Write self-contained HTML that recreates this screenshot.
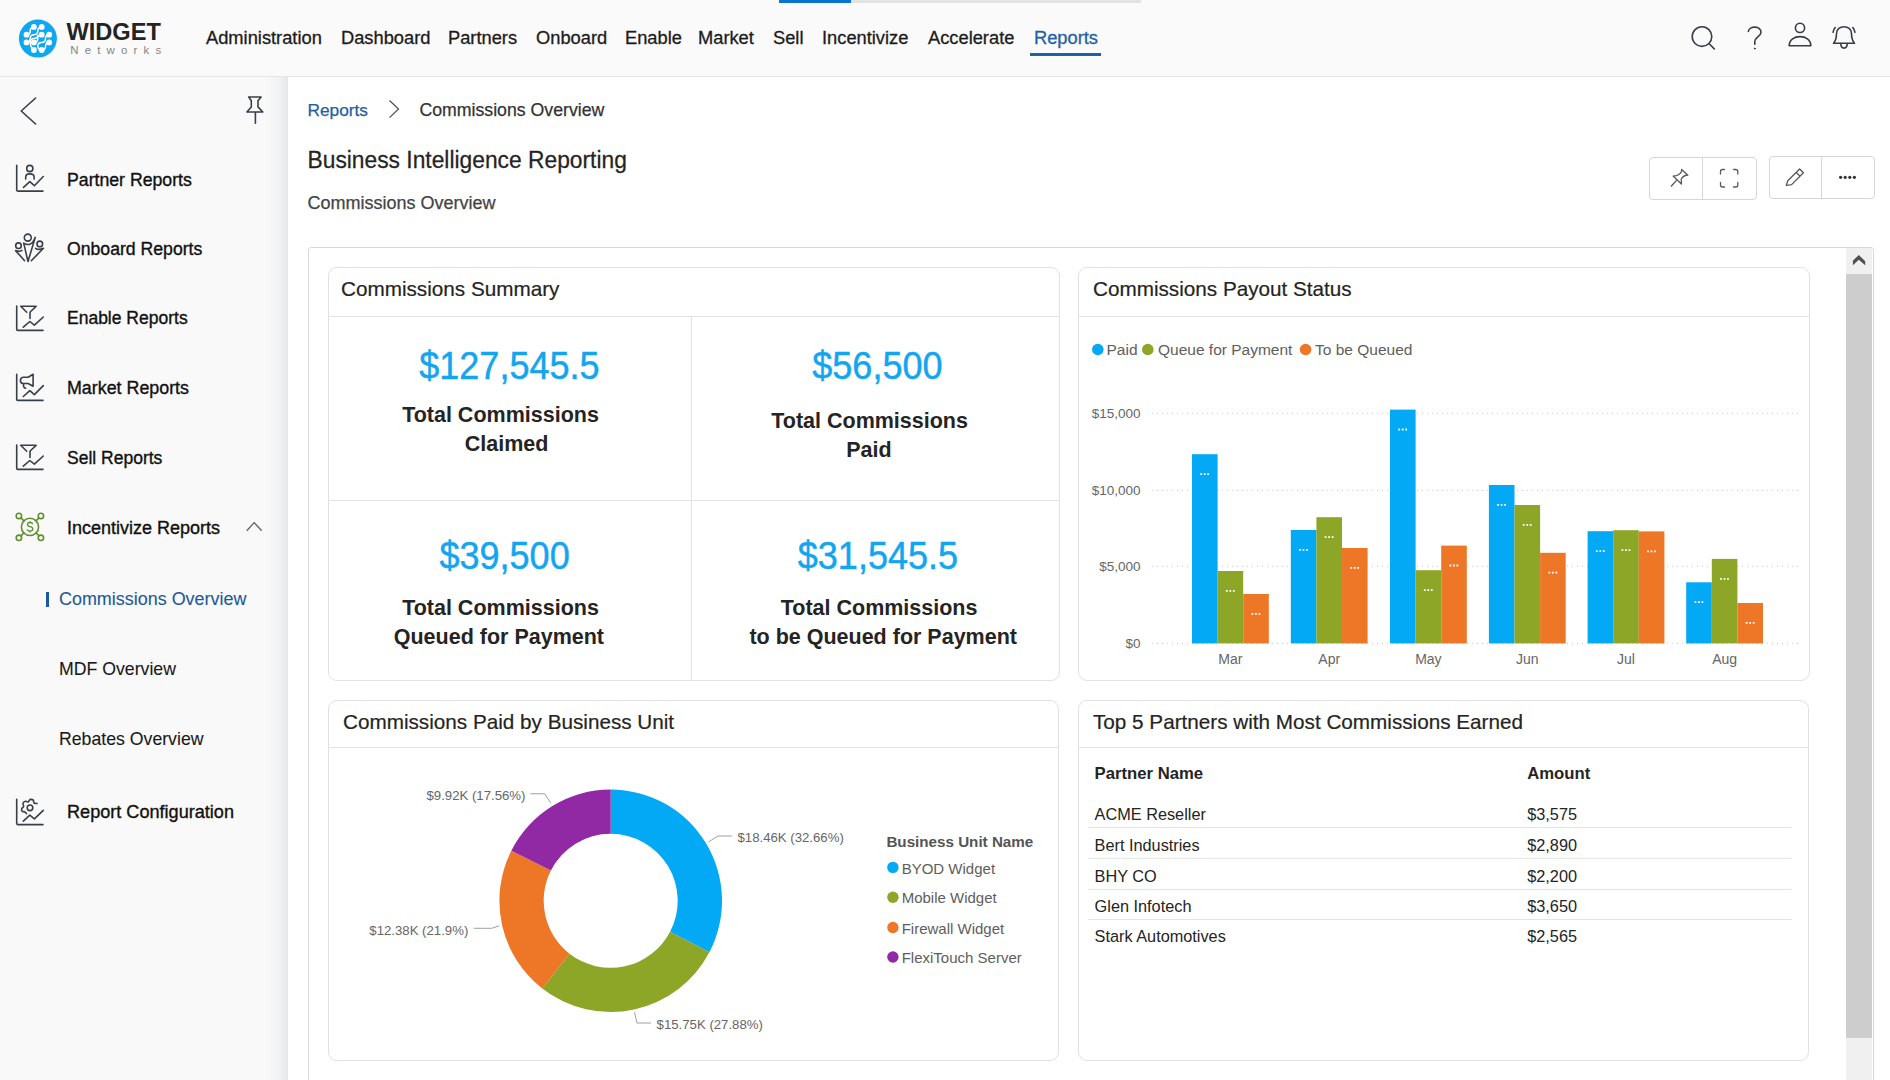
<!DOCTYPE html>
<html><head><meta charset="utf-8">
<style>
*{margin:0;padding:0;box-sizing:border-box}
html,body{width:1890px;height:1080px;overflow:hidden;background:#fff;font-family:"Liberation Sans",sans-serif;color:#222}
.abs{position:absolute}
.t{position:absolute;white-space:nowrap;line-height:1}
#hdr{position:absolute;left:0;top:0;width:1890px;height:77px;background:#fafafa;border-bottom:1px solid #e4e5e7}
.nav{position:absolute;top:28.8px;font-size:18.3px;color:#1c1c1c;-webkit-text-stroke:0.3px currentColor;white-space:nowrap;line-height:1}
#side{position:absolute;left:0;top:77px;width:288px;height:1003px;background:#f9f9f9}
#sideshadow{position:absolute;left:266px;top:77px;width:22px;height:1003px;background:linear-gradient(to right,rgba(232,233,236,0),rgba(232,233,236,0.45) 60%,#e5e7ea)}
.si{position:absolute;left:67px;font-size:17.7px;color:#111;-webkit-text-stroke:0.35px currentColor;white-space:nowrap;line-height:1}
.card{position:absolute;background:#fff;border:1px solid #e1e1e1;border-radius:9px}
.ctitle{position:absolute;font-size:20.7px;color:#252423;-webkit-text-stroke:0.2px currentColor;white-space:nowrap;line-height:1}
.kpi{position:absolute;font-size:36px;color:#12a5f0;white-space:nowrap;line-height:36px;transform:translateX(-50%) scaleY(1.07);transform-origin:50% 92%;-webkit-text-stroke:0.45px currentColor}
.klab{position:absolute;font-size:21.5px;font-weight:bold;color:#252423;white-space:nowrap;line-height:21.5px;transform:translateX(-50%)}
</style></head><body>

<!-- HEADER -->
<div id="hdr">
  <div class="abs" style="left:779px;top:0;width:72px;height:2.5px;background:#0a72d0"></div>
  <div class="abs" style="left:851px;top:0;width:290px;height:2.5px;background:#e3e3e3"></div>
  <svg class="abs" style="left:17px;top:18px" width="42" height="42" viewBox="0 0 42 42">
    <circle cx="20.9" cy="20.6" r="19" fill="#0ea8f0"/>
    <g fill="#fff">
      <circle cx="16.9" cy="8.9" r="2.9"/><circle cx="24.7" cy="8.9" r="2.9"/>
      <circle cx="9.5" cy="16.7" r="2.9"/><circle cx="24.7" cy="16.7" r="2.9"/><circle cx="32.2" cy="16.7" r="2.9"/>
      <circle cx="9.5" cy="24.4" r="2.9"/><circle cx="16.9" cy="24.4" r="2.9"/><circle cx="32.2" cy="24.4" r="2.9"/>
      <circle cx="16.9" cy="32" r="2.9"/><circle cx="24.7" cy="32" r="2.9"/>
    </g>
    <g stroke="#fff" stroke-width="1.5" fill="none">
      <path d="M9.5 16.7 Q13.5 16.5 13.2 12.8 Q13.2 9.5 16.9 8.9"/>
      <path d="M9.5 24.4 Q13.2 24.6 13.2 20.5 Q13.2 16.7 16.9 16.7 Q20.8 16.7 20.8 12.8 Q20.8 8.9 24.7 8.9"/>
      <path d="M16.9 32 Q13 28.5 13.2 24.4 Q13.5 20.5 16.9 20.5 Q20.8 20.5 20.8 16.7"/>
      <path d="M16.9 24.4 Q20.8 24.4 20.8 20.5 Q20.8 16.7 24.7 16.7"/>
      <path d="M24.7 32 Q20.8 31.8 20.8 28 Q20.8 24.4 24.7 24.4 Q28.6 24.4 28.5 20.5 Q28.6 16.7 32.2 16.7"/>
      <path d="M24.7 32 Q28.6 32 28.6 28 Q28.6 24.4 32.2 24.4"/>
    </g>
  </svg>
  <div class="t" style="left:66.5px;top:21px;font-size:23.6px;font-weight:bold;color:#242424">WIDGET</div>
  <div class="t" style="left:70.3px;top:45px;font-size:11.4px;color:#858585;letter-spacing:6.2px">Networks</div>

  <div class="nav" style="left:206px">Administration</div>
  <div class="nav" style="left:341px">Dashboard</div>
  <div class="nav" style="left:448px">Partners</div>
  <div class="nav" style="left:536px">Onboard</div>
  <div class="nav" style="left:625px">Enable</div>
  <div class="nav" style="left:698px">Market</div>
  <div class="nav" style="left:773px">Sell</div>
  <div class="nav" style="left:822px">Incentivize</div>
  <div class="nav" style="left:928px">Accelerate</div>
  <div class="nav" style="left:1034px;color:#1d62a6">Reports</div>
  <div class="abs" style="left:1030px;top:53px;width:71px;height:3px;background:#1d62a6"></div>

  <!-- right icons -->
  <svg class="abs" style="left:1680px;top:15px" width="190" height="45" viewBox="1680 15 190 45" fill="none" stroke="#3a3d42" stroke-width="1.6" stroke-linecap="round" stroke-linejoin="round">
    <circle cx="1702" cy="36.6" r="9.8"/><path d="M1709.2 43.8 L1714.3 48.9"/>
    <path d="M1748.3 31.5 C1749 25.5 1761.5 25.5 1761 32.5 C1760.7 36.5 1754.8 37.5 1754.8 41.5 L1754.8 44.3"/><circle cx="1754.8" cy="48.6" r="0.5" fill="#3a3d42" stroke-width="1"/>
    <circle cx="1800" cy="27.9" r="4.6"/><path d="M1789.2 45.8 C1789.2 33.5 1810.8 33.5 1810.8 45.8 Z"/>
    <path d="M1833.5 43.2 C1836 40.5 1836.5 37 1836.5 33.5 C1836.5 24.5 1851.5 24.5 1851.5 33.5 C1851.5 37 1852 40.5 1854.5 43.2 Z"/><path d="M1840.8 43.6 C1840.8 49.6 1847.2 49.6 1847.2 43.6"/>
    <path d="M1835.2 27.5 C1834 29 1833.3 30.5 1833 32.3"/><path d="M1852.8 27.5 C1854 29 1854.7 30.5 1855 32.3"/>
  </svg>
</div>

<!-- SIDEBAR -->
<div id="side"></div>
<div id="sideshadow"></div>
<svg class="abs" style="left:0;top:77px" width="288" height="800" viewBox="0 77 288 800" fill="none" stroke="#3a3e45" stroke-width="1.6" stroke-linecap="round" stroke-linejoin="round">
  <path d="M35.6 98 L21.2 111 L35.6 124"/>
  <g transform="translate(235,90)"><path d="M13.7 7 L26.1 7 L23 10.7 L23 16.9 L27.8 22 L11.9 22 L16.3 16.9 L16.3 10.7 Z M20.4 22 L20.4 33.3"/></g>
  <!-- partner -->
  <g transform="translate(10,155)">
    <path d="M6.7 10.4 L6.7 35.1 Q6.7 36.1 7.7 36.1 L33 36.1"/>
    <circle cx="19.8" cy="13.5" r="3.1"/>
    <path d="M15.7 24.1 L15.7 22 Q15.7 18.9 19.8 18.9 Q24.1 18.9 24.1 22 L24.1 24.1"/>
    <path d="M13.5 32.4 L19.8 26.7 L24.4 30.7 L33.3 21.5"/>
  </g>
  <!-- onboard -->
  <g transform="translate(10,225)">
    <circle cx="17.8" cy="12.6" r="3.5"/>
    <path d="M13.7 18.1 Q17.4 20.2 20 19.2 Q23 18 24 15 L25.2 12.4 L18 36.5 Z"/>
    <circle cx="8.5" cy="20.7" r="2.8"/>
    <path d="M11.9 25.4 Q10 27 5.6 25.6 L14.6 35.7"/>
    <circle cx="29.8" cy="18.9" r="2.8"/>
    <path d="M25.6 23.3 Q28.5 25.4 33.5 23.3 L21.3 35.7"/>
  </g>
  <!-- enable -->
  <g transform="translate(10,295)">
    <path d="M6.7 11.1 L6.7 34.4 Q6.7 35.4 7.7 35.4 L33 35.4"/>
    <path d="M16.7 17.2 L10.7 11.3 L26.1 11.3 L20.6 16.5 Q20 17.2 20 18 L20 23.5"/>
    <path d="M13.3 32.2 L19.8 26.5 L24.4 30.2 L33.3 22"/>
  </g>
  <!-- market -->
  <g transform="translate(10,365)">
    <path d="M6.7 9.3 L6.7 34.4 Q6.7 35.4 7.7 35.4 L33 35.4"/>
    <path d="M23.1 9.3 L23.1 21.3 L18.1 18.5 L13 18.5 Q10.4 18.2 10.4 15.4 Q10.6 12.5 13 12.2 L18.1 12.2 Z M13.5 18.5 L13.5 20.5 Q13.7 23 15.6 23.3"/>
    <path d="M13.3 31.5 L19.8 25.6 L24.4 29.6 L33.3 20.6"/>
  </g>
  <!-- sell -->
  <g transform="translate(10,434)">
    <path d="M6.7 11.1 L6.7 34.4 Q6.7 35.4 7.7 35.4 L33 35.4"/>
    <path d="M16.7 17.2 L10.7 11.3 L26.1 11.3 L20.6 16.5 Q20 17.2 20 18 L20 23.5"/>
    <path d="M13.3 32.2 L19.8 26.5 L24.4 30.2 L33.3 22"/>
  </g>
  <!-- incentivize -->
  <g transform="translate(10,505)" stroke="#5f8f2e">
    <circle cx="20" cy="21.9" r="8.6"/>
    <circle cx="8.9" cy="10.9" r="2.7"/><circle cx="30.9" cy="10.9" r="2.7"/><circle cx="8.9" cy="32.8" r="2.7"/><circle cx="30.9" cy="32.8" r="2.7"/>
    <path d="M10.9 12.9 L13.9 15.9 M28.9 12.9 L26 15.9 M10.9 30.8 L13.9 27.9 M28.9 30.8 L26 27.9"/>
    <path d="M22.6 18.6 Q21.8 17.5 20 17.5 Q17.5 17.5 17.5 19.5 Q17.5 21.3 20 21.6 Q22.8 22 22.8 24 Q22.8 26.1 20 26.1 Q18 26.1 17.3 24.9 M20 16.6 L20 17.5 M20 26.1 L20 27.2" stroke-width="1.3"/>
  </g>
  <path d="M246.7 530.8 L254.2 522.6 L261.7 530.8" stroke="#666" stroke-width="1.4" stroke-linecap="butt"/>
  <!-- report config -->
  <g transform="translate(10,790)">
    <path d="M6.7 9.3 L6.7 33.6 Q6.7 34.6 7.7 34.6 L33 34.6"/>
    <circle cx="20" cy="17.8" r="2.8"/>
    <path d="M16.5 23.7 Q15.7 22 14 21.6 Q12.3 22.2 11.7 20.5 Q11.2 18.8 12.4 17.7 Q14 17 13.6 15.6 Q12.5 14 13.2 12.8 Q14.5 11 15.8 11.2 Q17.3 12.3 18.4 11.8 Q19.2 10.4 20.2 9.4 Q22 9.1 23.4 10.2 Q23.6 11.8 24 13 Q25.5 13.8 27 13.4"/>
    <path d="M13.3 31.1 L19.8 25.2 L24.4 28.9 L33.3 20.4"/>
  </g>
</svg>

<div class="si" style="top:171.8px;font-size:17.7px">Partner Reports</div>
<div class="si" style="top:240.7px;font-size:17.65px">Onboard Reports</div>
<div class="si" style="top:310.2px;font-size:17.5px">Enable Reports</div>
<div class="si" style="top:380.2px;font-size:17.85px">Market Reports</div>
<div class="si" style="top:449.6px;font-size:17.5px">Sell Reports</div>
<div class="si" style="top:519.1px;font-size:18.0px">Incentivize Reports</div>
<div class="si" style="top:590.7px;left:59px;color:#1d5a99;-webkit-text-stroke:0.1px currentColor;font-size:17.95px">Commissions Overview</div>
<div class="abs" style="left:46px;top:591.5px;width:3px;height:15.5px;background:#1d5a99"></div>
<div class="si" style="top:661.0px;left:59px;-webkit-text-stroke:0.1px currentColor;color:#1a1a1a">MDF Overview</div>
<div class="si" style="top:731.3px;left:59px;-webkit-text-stroke:0.1px currentColor;color:#1a1a1a">Rebates Overview</div>
<div class="si" style="top:802.8px;font-size:18.1px">Report Configuration</div>

<!-- CONTENT HEADER -->
<div class="t" style="left:307.5px;top:101.5px;font-size:17.3px;color:#1f5f9f;-webkit-text-stroke:0.25px currentColor">Reports</div>
<svg class="abs" style="left:385px;top:98px" width="16" height="22" viewBox="0 0 16 22" fill="none" stroke="#555" stroke-width="1.3"><path d="M4.5 2.6 L13.5 11 L4.5 19.6"/></svg>
<div class="t" style="left:419.5px;top:101.5px;font-size:17.7px;color:#333;-webkit-text-stroke:0.25px currentColor">Commissions Overview</div>
<div class="t" style="left:307.5px;top:148.5px;font-size:22.8px;color:#252423;transform:scaleY(1.08);transform-origin:0 100%;-webkit-text-stroke:0.25px currentColor">Business Intelligence Reporting</div>
<div class="t" style="left:307.5px;top:194px;font-size:18px;color:#444;-webkit-text-stroke:0.25px currentColor">Commissions Overview</div>

<!-- button groups -->
<div class="abs" style="left:1649px;top:157px;width:108px;height:43px;border:1px solid #d4d6da;border-radius:4px;background:#fff"></div>
<div class="abs" style="left:1702px;top:157px;width:1px;height:43px;background:#d4d6da"></div>
<div class="abs" style="left:1769px;top:156px;width:106px;height:43px;border:1px solid #d4d6da;border-radius:4px;background:#fff"></div>
<div class="abs" style="left:1821px;top:156px;width:1px;height:43px;background:#d4d6da"></div>
<svg class="abs" style="left:1649px;top:156px" width="226" height="44" viewBox="1649 156 226 44" fill="none" stroke="#555" stroke-width="1.4" stroke-linecap="round" stroke-linejoin="round">
  <path d="M1681.7 169.4 L1687.8 175.2 L1685.3 175.5 Q1683.5 176 1681.6 178.4 Q1680.8 179.8 1681.4 181 L1681.4 184.1 L1673.1 176.1 L1676.2 175.6 Q1678.5 175 1680.4 173.2 Q1681.8 171.8 1681.7 169.4 Z M1676.3 180.6 L1671.4 186" stroke="#5a5a5a" stroke-width="1.35"/>
  <path d="M1720.5 174 L1720.5 171.5 Q1720.5 169.5 1722.5 169.5 L1724.5 169.5 M1733.5 169.5 L1735.8 169.5 Q1737.8 169.5 1737.8 171.5 L1737.8 174 M1737.8 182.5 L1737.8 185 Q1737.8 187 1735.8 187 L1733.5 187 M1724.5 187 L1722.5 187 Q1720.5 187 1720.5 185 L1720.5 182.5" stroke="#5a5a5a" stroke-width="1.3"/>
  <path d="M1786.3 185.5 L1787.8 180.8 L1799.6 169 L1803.4 172.8 L1791.6 184.6 Z M1796.2 172.4 L1800 176.2" stroke="#555" stroke-width="1.25"/>
</svg>
<svg class="abs" style="left:1836px;top:173px" width="24" height="9" viewBox="1836 173 24 9" fill="#333"><circle cx="1840.6" cy="177.3" r="1.6"/><circle cx="1845.2" cy="177.3" r="1.6"/><circle cx="1849.8" cy="177.3" r="1.6"/><circle cx="1854.4" cy="177.3" r="1.6"/></svg>

<!-- REPORT CONTAINER -->
<div class="abs" style="left:308px;top:247px;width:1566px;height:840px;border:1px solid #d5d9de;border-radius:3px;background:#fff"></div>
<!-- scrollbar -->
<div class="abs" style="left:1846px;top:248px;width:26px;height:832px;background:#f0f0f0"></div>
<div class="abs" style="left:1846px;top:274px;width:26px;height:764px;background:#cdcdcd"></div>
<svg class="abs" style="left:1846px;top:248px" width="26" height="26" viewBox="1846 248 26 26"><path d="M1852.9 260.8 L1858.8 255 L1865.2 261.2 L1865.2 265.3 L1858.8 259.8 L1852.9 265.3 Z" fill="#505050"/></svg>

<!-- CARD 1: Commissions Summary -->
<div class="card" style="left:328px;top:267px;width:732px;height:414px"></div>
<div class="ctitle" style="left:341px;top:279px">Commissions Summary</div>
<div class="abs" style="left:329px;top:316px;width:730px;height:1px;background:#e3e3e3"></div>
<div class="abs" style="left:691px;top:317px;width:1px;height:363px;background:#e3e3e3"></div>
<div class="abs" style="left:329px;top:500px;width:730px;height:1px;background:#e3e3e3"></div>

<div class="kpi" style="left:509.4px;top:349.0px">$127,545.5</div>
<div class="kpi" style="left:877.4px;top:349.0px">$56,500</div>
<div class="kpi" style="left:504.6px;top:539.4px">$39,500</div>
<div class="kpi" style="left:877.9px;top:539.4px">$31,545.5</div>
<div class="klab" style="left:500.5px;top:405.0px">Total Commissions</div>
<div class="klab" style="left:506.6px;top:434.0px">Claimed</div>
<div class="klab" style="left:869.6px;top:410.7px">Total Commissions</div>
<div class="klab" style="left:868.9px;top:440.0px">Paid</div>
<div class="klab" style="left:500.5px;top:598.1px">Total Commissions</div>
<div class="klab" style="left:498.9px;top:626.9px">Queued for Payment</div>
<div class="klab" style="left:879.1px;top:598.1px">Total Commissions</div>
<div class="klab" style="left:883.2px;top:626.9px">to be Queued for Payment</div>

<!-- CARD 2: Payout Status -->
<div class="card" style="left:1078px;top:267px;width:732px;height:414px"></div>
<div class="ctitle" style="left:1093px;top:279px">Commissions Payout Status</div>
<div class="abs" style="left:1079px;top:316px;width:730px;height:1px;background:#e3e3e3"></div>
<svg class="abs" style="left:1079px;top:317px" width="730" height="362" viewBox="1079 317 730 362">
<line x1="1152" y1="413.3" x2="1800" y2="413.3" stroke="#c8c8c8" stroke-width="1" stroke-dasharray="1 4"/>
<text x="1140.5" y="418.1" text-anchor="end" font-size="13.5" fill="#666">$15,000</text>
<line x1="1152" y1="490.4" x2="1800" y2="490.4" stroke="#c8c8c8" stroke-width="1" stroke-dasharray="1 4"/>
<text x="1140.5" y="495.2" text-anchor="end" font-size="13.5" fill="#666">$10,000</text>
<line x1="1152" y1="566.3" x2="1800" y2="566.3" stroke="#c8c8c8" stroke-width="1" stroke-dasharray="1 4"/>
<text x="1140.5" y="571.1" text-anchor="end" font-size="13.5" fill="#666">$5,000</text>
<line x1="1152" y1="643.4" x2="1800" y2="643.4" stroke="#c8c8c8" stroke-width="1" stroke-dasharray="1 4"/>
<text x="1140.5" y="648.2" text-anchor="end" font-size="13.5" fill="#666">$0</text>
<rect x="1192.0" y="454.2" width="25.6" height="189.2" fill="#03a9f4"/>
<path d="M1200.3 473.2 h1.8v1.8h-1.8zM1203.8 473.2 h1.8v1.8h-1.8zM1207.3 473.2 h1.8v1.8h-1.8z" fill="#fff"/>
<rect x="1217.6" y="571.0" width="25.6" height="72.4" fill="#8da628"/>
<path d="M1225.9 590.0 h1.8v1.8h-1.8zM1229.4 590.0 h1.8v1.8h-1.8zM1232.9 590.0 h1.8v1.8h-1.8z" fill="#fff"/>
<rect x="1243.2" y="594.0" width="25.6" height="49.4" fill="#ee7727"/>
<path d="M1251.5 613.0 h1.8v1.8h-1.8zM1255.0 613.0 h1.8v1.8h-1.8zM1258.5 613.0 h1.8v1.8h-1.8z" fill="#fff"/>
<text x="1230.4" y="663.5" text-anchor="middle" font-size="14" fill="#666">Mar</text>
<rect x="1290.8" y="530.0" width="25.6" height="113.4" fill="#03a9f4"/>
<path d="M1299.1 549.0 h1.8v1.8h-1.8zM1302.6 549.0 h1.8v1.8h-1.8zM1306.1 549.0 h1.8v1.8h-1.8z" fill="#fff"/>
<rect x="1316.4" y="517.2" width="25.6" height="126.2" fill="#8da628"/>
<path d="M1324.7 536.2 h1.8v1.8h-1.8zM1328.2 536.2 h1.8v1.8h-1.8zM1331.7 536.2 h1.8v1.8h-1.8z" fill="#fff"/>
<rect x="1342.0" y="548.0" width="25.6" height="95.4" fill="#ee7727"/>
<path d="M1350.3 567.0 h1.8v1.8h-1.8zM1353.8 567.0 h1.8v1.8h-1.8zM1357.3 567.0 h1.8v1.8h-1.8z" fill="#fff"/>
<text x="1329.2" y="663.5" text-anchor="middle" font-size="14" fill="#666">Apr</text>
<rect x="1390.0" y="409.6" width="25.6" height="233.8" fill="#03a9f4"/>
<path d="M1398.3 428.6 h1.8v1.8h-1.8zM1401.8 428.6 h1.8v1.8h-1.8zM1405.3 428.6 h1.8v1.8h-1.8z" fill="#fff"/>
<rect x="1415.6" y="570.2" width="25.6" height="73.2" fill="#8da628"/>
<path d="M1423.9 589.2 h1.8v1.8h-1.8zM1427.4 589.2 h1.8v1.8h-1.8zM1430.9 589.2 h1.8v1.8h-1.8z" fill="#fff"/>
<rect x="1441.2" y="545.6" width="25.6" height="97.8" fill="#ee7727"/>
<path d="M1449.5 564.6 h1.8v1.8h-1.8zM1453.0 564.6 h1.8v1.8h-1.8zM1456.5 564.6 h1.8v1.8h-1.8z" fill="#fff"/>
<text x="1428.4" y="663.5" text-anchor="middle" font-size="14" fill="#666">May</text>
<rect x="1488.9" y="485.0" width="25.6" height="158.4" fill="#03a9f4"/>
<path d="M1497.2 504.0 h1.8v1.8h-1.8zM1500.7 504.0 h1.8v1.8h-1.8zM1504.2 504.0 h1.8v1.8h-1.8z" fill="#fff"/>
<rect x="1514.5" y="505.0" width="25.6" height="138.4" fill="#8da628"/>
<path d="M1522.8 524.0 h1.8v1.8h-1.8zM1526.3 524.0 h1.8v1.8h-1.8zM1529.8 524.0 h1.8v1.8h-1.8z" fill="#fff"/>
<rect x="1540.1" y="552.8" width="25.6" height="90.6" fill="#ee7727"/>
<path d="M1548.4 571.8 h1.8v1.8h-1.8zM1551.9 571.8 h1.8v1.8h-1.8zM1555.4 571.8 h1.8v1.8h-1.8z" fill="#fff"/>
<text x="1527.3" y="663.5" text-anchor="middle" font-size="14" fill="#666">Jun</text>
<rect x="1587.6" y="531.2" width="25.6" height="112.2" fill="#03a9f4"/>
<path d="M1595.9 550.2 h1.8v1.8h-1.8zM1599.4 550.2 h1.8v1.8h-1.8zM1602.9 550.2 h1.8v1.8h-1.8z" fill="#fff"/>
<rect x="1613.2" y="530.2" width="25.6" height="113.2" fill="#8da628"/>
<path d="M1621.5 549.2 h1.8v1.8h-1.8zM1625.0 549.2 h1.8v1.8h-1.8zM1628.5 549.2 h1.8v1.8h-1.8z" fill="#fff"/>
<rect x="1638.8" y="531.4" width="25.6" height="112.0" fill="#ee7727"/>
<path d="M1647.1 550.4 h1.8v1.8h-1.8zM1650.6 550.4 h1.8v1.8h-1.8zM1654.1 550.4 h1.8v1.8h-1.8z" fill="#fff"/>
<text x="1626.0" y="663.5" text-anchor="middle" font-size="14" fill="#666">Jul</text>
<rect x="1686.2" y="582.3" width="25.6" height="61.1" fill="#03a9f4"/>
<path d="M1694.5 601.3 h1.8v1.8h-1.8zM1698.0 601.3 h1.8v1.8h-1.8zM1701.5 601.3 h1.8v1.8h-1.8z" fill="#fff"/>
<rect x="1711.8" y="558.9" width="25.6" height="84.5" fill="#8da628"/>
<path d="M1720.1 577.9 h1.8v1.8h-1.8zM1723.6 577.9 h1.8v1.8h-1.8zM1727.1 577.9 h1.8v1.8h-1.8z" fill="#fff"/>
<rect x="1737.4" y="603.0" width="25.6" height="40.4" fill="#ee7727"/>
<path d="M1745.7 622.0 h1.8v1.8h-1.8zM1749.2 622.0 h1.8v1.8h-1.8zM1752.7 622.0 h1.8v1.8h-1.8z" fill="#fff"/>
<text x="1724.6" y="663.5" text-anchor="middle" font-size="14" fill="#666">Aug</text>
<circle cx="1097.8" cy="349.5" r="5.8" fill="#03a9f4"/><text x="1106.5" y="355" font-size="15.5" fill="#605e5c">Paid</text>
<circle cx="1147.8" cy="349.5" r="5.8" fill="#8da628"/><text x="1158" y="355" font-size="15.5" fill="#605e5c">Queue for Payment</text>
<circle cx="1305.6" cy="349.5" r="5.8" fill="#ee7727"/><text x="1315" y="355" font-size="15.5" fill="#605e5c">To be Queued</text>
</svg>

<!-- CARD 3: Paid by BU -->
<div class="card" style="left:328px;top:700px;width:731px;height:361px"></div>
<div class="ctitle" style="left:343px;top:712px">Commissions Paid by Business Unit</div>
<div class="abs" style="left:329px;top:747px;width:729px;height:1px;background:#e3e3e3"></div>
<svg class="abs" style="left:329px;top:748px" width="729" height="312" viewBox="329 748 729 312">
<path d="M610.70 789.50 A111.3 111.3 0 0 1 709.36 952.32 L670.09 931.82 A67 67 0 0 0 610.70 833.80 Z" fill="#03a9f4"/>
<path d="M709.36 952.32 A111.3 111.3 0 0 1 542.26 988.57 L569.50 953.64 A67 67 0 0 0 670.09 931.82 Z" fill="#8da628"/>
<path d="M542.26 988.57 A111.3 111.3 0 0 1 511.34 850.65 L550.89 870.61 A67 67 0 0 0 569.50 953.64 Z" fill="#ee7727"/>
<path d="M511.34 850.65 A111.3 111.3 0 0 1 610.70 789.50 L610.70 833.80 A67 67 0 0 0 550.89 870.61 Z" fill="#9128a4"/>
<g fill="none" stroke="#a0a0a0" stroke-width="1">
<path d="M530.3 793.8 L544.7 793.8 L550.8 803.3"/>
<path d="M473.8 928.3 L491.7 928.3 L499.2 925.8"/>
<path d="M708.4 842 L718 836 L731.8 836"/>
<path d="M634.5 1012.3 L637 1023 L650.9 1023"/>
</g>
<g font-size="13.2" fill="#666">
<text x="525.5" y="800" text-anchor="end">$9.92K (17.56%)</text>
<text x="468.3" y="935" text-anchor="end">$12.38K (21.9%)</text>
<text x="737.5" y="842">$18.46K (32.66%)</text>
<text x="656.6" y="1029.3">$15.75K (27.88%)</text>
</g>
<text x="886.4" y="847.2" font-size="15.2" font-weight="bold" fill="#555">Business Unit Name</text>
<circle cx="892.9" cy="867.4" r="5.7" fill="#03a9f4"/><text x="901.7" y="873.6" font-size="15" fill="#605e5c">BYOD Widget</text>
<circle cx="892.9" cy="897.2" r="5.7" fill="#8da628"/><text x="901.7" y="903.4" font-size="15" fill="#605e5c">Mobile Widget</text>
<circle cx="892.9" cy="927.5" r="5.7" fill="#ee7727"/><text x="901.7" y="933.7" font-size="15" fill="#605e5c">Firewall Widget</text>
<circle cx="892.9" cy="957" r="5.7" fill="#9128a4"/><text x="901.7" y="963.2" font-size="15" fill="#605e5c">FlexiTouch Server</text>
</svg>

<!-- CARD 4: Top 5 -->
<div class="card" style="left:1078px;top:700px;width:731px;height:361px"></div>
<div class="ctitle" style="left:1093px;top:712px">Top 5 Partners with Most Commissions Earned</div>
<div class="abs" style="left:1079px;top:747px;width:729px;height:1px;background:#e3e3e3"></div>
<svg class="abs" style="left:1079px;top:748px" width="729" height="312" viewBox="1079 748 729 312">
<text x="1094.6" y="778.8" font-size="16.7" font-weight="bold" fill="#252423">Partner Name</text>
<text x="1527.2" y="778.8" font-size="16.7" font-weight="bold" fill="#252423">Amount</text>
<text x="1094.6" y="819.6" font-size="16.3" fill="#252423">ACME Reseller</text><text x="1527.2" y="819.6" font-size="16.3" fill="#252423">$3,575</text>
<text x="1094.6" y="850.7" font-size="16.3" fill="#252423">Bert Industries</text><text x="1527.2" y="850.7" font-size="16.3" fill="#252423">$2,890</text>
<text x="1094.6" y="881.6" font-size="16.3" fill="#252423">BHY CO</text><text x="1527.2" y="881.6" font-size="16.3" fill="#252423">$2,200</text>
<text x="1094.6" y="911.7" font-size="16.3" fill="#252423">Glen Infotech</text><text x="1527.2" y="911.7" font-size="16.3" fill="#252423">$3,650</text>
<text x="1094.6" y="942.4" font-size="16.3" fill="#252423">Stark Automotives</text><text x="1527.2" y="942.4" font-size="16.3" fill="#252423">$2,565</text>
<rect x="1088.2" y="826.9" width="703.4" height="1" fill="#e3e3e3"/>
<rect x="1088.2" y="857.8" width="703.4" height="1" fill="#e3e3e3"/>
<rect x="1088.2" y="888.9" width="703.4" height="1" fill="#e3e3e3"/>
<rect x="1088.2" y="919.0" width="703.4" height="1" fill="#e3e3e3"/>
</svg>

</body></html>
